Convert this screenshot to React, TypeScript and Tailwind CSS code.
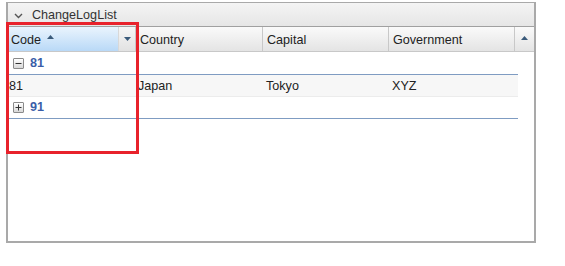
import React from "react";

function Toggle({ open }: { open: boolean }) {
  return (
    <span className="inline-flex items-center justify-center w-[11px] h-[11px] border border-[#8a8a8a] bg-gradient-to-b from-white to-[#d8d8d8] rounded-[1px]">
      <svg width="7" height="7" viewBox="0 0 7 7">
        <rect x="0.5" y="3" width="6" height="1" fill="#333" />
        {!open && <rect x="3" y="0.5" width="1" height="6" fill="#333" />}
      </svg>
    </span>
  );
}

export default function App() {
  return (
    <div className="relative w-[565px] h-[266px] bg-white text-[12.6px] text-[#222]" style={{ fontFamily: "'Liberation Sans', Arial, sans-serif" }}>
      <div className="pt-[2px] pl-[6px]">
        <div className="w-[530px] h-[241px] border-x-2 border-b-2 border-t border-[#a9a9a9] bg-white flex flex-col">
          {/* title bar */}
          <div className="h-[24px] flex items-center pt-[2px] bg-gradient-to-b from-[#f4f4f4] to-[#e6e6e6] border-b border-[#a0a0a0]">
            <svg width="9" height="6" viewBox="0 0 9 6" className="ml-[6px]">
              <path d="M1 1 L4.5 4.5 L8 1" stroke="#555" strokeWidth="1.4" fill="none" />
            </svg>
            <span className="ml-[9px] text-[#333]">ChangeLogList</span>
          </div>
          {/* header */}
          <div className="h-[25px] flex border-b border-[#c8c8c8]">
            <div className="w-[110px] flex items-center pl-[3px] pt-[2px] bg-gradient-to-b from-[#eaf4fd] to-[#b9d9f7]">
              <span>Code</span>
              <svg width="7" height="4" viewBox="0 0 7 4" className="ml-[6px] -mt-[6px]">
                <path d="M0 4 L3.5 0 L7 4 Z" fill="#3a5a7a" />
              </svg>
            </div>
            <div className="w-[17px] flex items-center justify-center bg-gradient-to-b from-[#f6f6f6] to-[#e2e2e2] border-l border-[#d8d8d8]">
              <svg width="7" height="4" viewBox="0 0 7 4">
                <path d="M0 0 L3.5 4 L7 0 Z" fill="#3a5a7a" />
              </svg>
            </div>
            <div className="w-[127px] flex items-center pl-[4px] pt-[2px] bg-gradient-to-b from-[#fafafa] to-[#e4e4e4] border-l border-[#c8c8c8]">Country</div>
            <div className="w-[126px] flex items-center pl-[4px] pt-[2px] bg-gradient-to-b from-[#fafafa] to-[#e4e4e4] border-l border-[#c8c8c8]">Capital</div>
            <div className="w-[126px] flex items-center pl-[4px] pt-[2px] bg-gradient-to-b from-[#fafafa] to-[#e4e4e4] border-l border-[#c8c8c8]">Government</div>
            <div className="flex-1 flex items-center justify-center bg-gradient-to-b from-[#fafafa] to-[#e4e4e4] border-l border-[#c8c8c8]">
              <svg width="7" height="4" viewBox="0 0 7 4" className="-mt-[3px]">
                <path d="M0 4 L3.5 0 L7 4 Z" fill="#3a5a7a" />
              </svg>
            </div>
          </div>
          {/* rows */}
          <div className="w-[510px]">
            <div className="h-[23px] flex items-center pl-[5px] pt-[1px] border-b border-[#7f9cc2]">
              <Toggle open />
              <span className="ml-[6px] text-[#3a5ea8] font-bold">81</span>
            </div>
            <div className="h-[22px] flex items-center pt-[2px] pl-[1px] bg-[#f7f7f7] border-b border-[#ececec]">
              <span className="w-[127px]">81</span>
              <span className="w-[127px] pl-[2px]">Japan</span>
              <span className="w-[126px] pl-[3px]">Tokyo</span>
              <span className="pl-[3px]">XYZ</span>
            </div>
            <div className="h-[22px] flex items-center pl-[5px] border-b border-[#7f9cc2]">
              <Toggle open={false} />
              <span className="ml-[6px] text-[#3a5ea8] font-bold">91</span>
            </div>
          </div>
        </div>
      </div>
      {/* red highlight */}
      <div className="absolute left-[6px] top-[22px] w-[133px] h-[132px] border-[3px] border-[#e8222b] pointer-events-none" />
    </div>
  );
}
